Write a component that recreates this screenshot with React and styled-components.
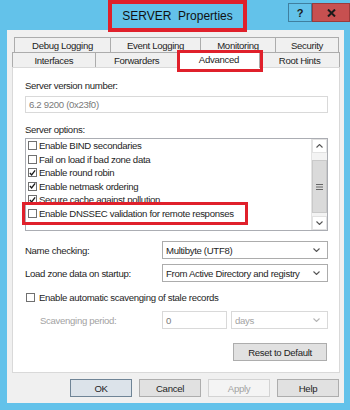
import React from 'react';
import styled, { createGlobalStyle } from 'styled-components';

const GlobalStyle = createGlobalStyle`
  * {
    margin: 0;
    padding: 0;
    box-sizing: border-box;
  }
  body {
    background: #63c2ea;
    font-family: "Liberation Sans", Arial, sans-serif;
    font-size: 9.6px;
    letter-spacing: -0.32px;
    color: #1e1e1e;
  }
`

const Frame = styled.div`
  width: 350px;
  height: 410px;
  background: #63c2ea;
  display: flex;
  flex-direction: column;
  padding: 0 6px 7px 7px;
`

const TitleBar = styled.div`
  height: 30px;
  position: relative;
  display: flex;
  justify-content: center;
`

const Title = styled.div`
  margin-left: 4px;
  width: 139px;
  height: 32px;
  border: 4px solid #e0202b;
  display: flex;
  align-items: center;
  justify-content: center;
  font-size: 12px;
  letter-spacing: 0;
  color: #111;
  white-space: pre;
  position: relative;
  z-index: 3;
`

const Caption = styled.div`
  position: absolute;
  top: 3px;
  right: -6px;
  display: flex;
`

const CaptionButton = styled.div`
  width: ${p => p.$w}px;
  height: 19px;
  display: flex;
  align-items: center;
  justify-content: center;
  background: ${p => (p.$close ? '#c75050' : '#63c2ea')};
  border: 1px solid ${p => (p.$close ? '#9b3b3b' : '#3f7f9f')};
  font-weight: bold;
  font-size: 11px;
  letter-spacing: 0;
  color: #1a1a1a;
`

const Client = styled.div`
  flex: 1;
  background: #f0f0f0;
  padding: 7px 4px 0 5px;
  display: flex;
  flex-direction: column;
`

const TabRow = styled.div`
  display: flex;
  height: 15px;
  margin-left: ${p => p.$indent || 0}px;
  position: relative;
  z-index: ${p => (p.$front ? 2 : 1)};
`

const Tab = styled.div`
  width: ${p => p.$w}px;
  display: flex;
  align-items: center;
  justify-content: center;
  border: 1px solid #acacac;
  border-bottom: none;
  margin-left: -1px;
  background: #f0f0f0;
  &:first-child {
    margin-left: 0;
  }
`

const ActiveTab = styled(Tab)`
  background: #fff;
  height: 18px;
  margin-top: -2px;
  position: relative;
  z-index: 2;
`

const Mark = styled.span`
  position: absolute;
  border: 3.5px solid #e0202b;
  top: ${p => p.$t}px;
  left: ${p => p.$l}px;
  right: ${p => p.$r}px;
  bottom: ${p => p.$b}px;
  pointer-events: none;
  z-index: 4;
`

const Panel = styled.div`
  height: 306px;
  background: #fff;
  border: 1px solid #d9d9d9;
  padding: 11px 11px 0 12px;
  display: flex;
  flex-direction: column;
`

const Label = styled.div`
  height: 13px;
  line-height: 13px;
  margin-top: ${p => p.$mt || 0}px;
  color: ${p => (p.$disabled ? '#a3a3a3' : '#1e1e1e')};
  padding-left: ${p => p.$indent || 0}px;
  width: ${p => (p.$w ? `${p.$w}px` : 'auto')};
  flex-shrink: 0;
`

const TextBox = styled.div`
  height: ${p => p.$h || 17}px;
  width: ${p => (p.$w ? `${p.$w}px` : 'auto')};
  margin-top: ${p => p.$mt || 0}px;
  border: 1px solid #d9d9d9;
  background: #fff;
  color: #7a7a7a;
  padding-left: 3px;
  display: flex;
  align-items: center;
`

const ListBox = styled.div`
  margin-top: 2px;
  height: 93px;
  border: 1px solid #abadb3;
  display: flex;
  position: relative;
`

const Items = styled.div`
  flex: 1;
  padding: 0 0 0 2px;
  overflow: hidden;
`

const Item = styled.div`
  height: 13.5px;
  display: flex;
  align-items: center;
  white-space: nowrap;
`

const Box = styled.span`
  width: 9px;
  height: 9px;
  border: 1px solid #707070;
  background: #fff;
  margin-right: ${p => p.$gap || 2}px;
  display: flex;
  align-items: center;
  justify-content: center;
  flex-shrink: 0;
`

const ScrollBar = styled.div`
  width: 16px;
  border-left: 1px solid #e3e3e3;
  background: #f3f3f3;
  display: flex;
  flex-direction: column;
`

const ScrollButton = styled.div`
  height: 14px;
  background: #fff;
  border: 1px solid #e2e2e2;
  display: flex;
  align-items: center;
  justify-content: center;
`

const Thumb = styled.div`
  height: 53px;
  margin: 7px 0 0 0;
  background: #dadada;
  border: 1px solid #c9c9c9;
  display: flex;
  align-items: center;
  justify-content: center;
`

const Spacer = styled.div`
  flex: 1;
`

const FieldRow = styled.div`
  display: flex;
  align-items: center;
  margin-top: ${p => p.$mt || 0}px;
`

const Select = styled.div`
  width: ${p => p.$w}px;
  height: ${p => p.$h || 18}px;
  margin-left: ${p => p.$ml || 0}px;
  border: 1px solid ${p => (p.$disabled ? '#d9d9d9' : '#acacac')};
  background: #fff;
  color: ${p => (p.$disabled ? '#a3a3a3' : '#1e1e1e')};
  display: flex;
  align-items: center;
  justify-content: space-between;
  padding: 0 7px 0 3px;
`

const CheckRow = styled.div`
  display: flex;
  align-items: center;
  height: 13px;
  margin-top: 9px;
  padding-left: 1px;
`

const Button = styled.div`
  width: ${p => p.$w}px;
  height: 18px;
  display: flex;
  align-items: center;
  justify-content: center;
  background: ${p => (p.$default ? '#dce3ea' : p.$disabled ? '#f4f4f4' : '#e1e1e1')};
  border: 1px solid ${p => (p.$default ? '#6f8496' : p.$disabled ? '#d3d3d3' : '#adadad')};
  color: ${p => (p.$disabled ? '#a3a3a3' : '#1e1e1e')};
`

const ResetRow = styled.div`
  display: flex;
  justify-content: flex-end;
  margin-top: 14px;
  padding-right: 1px;
`

const Footer = styled.div`
  display: flex;
  justify-content: flex-end;
  gap: 7px;
  padding: 6px 1px 0 0;
`

const Chevron = ({ up, color = '#555' }) => (
  <svg width="7" height="4" viewBox="0 0 7 4">
    <path d={up ? 'M0.5 3.5 L3.5 0.5 L6.5 3.5' : 'M0.5 0.5 L3.5 3.5 L6.5 0.5'} fill="none" stroke={color} strokeWidth="1.1" />
  </svg>
)

const Tick = () => (
  <svg width="8" height="8" viewBox="0 0 8 8">
    <path d="M1 4 L3 6.3 L7 1" fill="none" stroke="#1a1a1a" strokeWidth="1.5" />
  </svg>
)

const Grip = () => (
  <svg width="7" height="6" viewBox="0 0 7 6">
    <path d="M0 0.5 H7 M0 3 H7 M0 5.5 H7" stroke="#666" strokeWidth="1" />
  </svg>
)

const CloseGlyph = () => (
  <svg width="9" height="8" viewBox="0 0 9 8">
    <path d="M1 0.5 L8 7.5 M8 0.5 L1 7.5" stroke="#1a1a1a" strokeWidth="2" />
  </svg>
)

const options = [
  { text: 'Enable BIND secondaries', on: false },
  { text: 'Fail on load if bad zone data', on: false },
  { text: 'Enable round robin', on: true },
  { text: 'Enable netmask ordering', on: true },
  { text: 'Secure cache against pollution', on: true },
  { text: 'Enable DNSSEC validation for remote responses', on: false },
]

export default function App() {
  return (
    <Frame>
      <GlobalStyle />
      <TitleBar>
        <Title>{'SERVER  Properties'}</Title>
        <Caption>
          <CaptionButton $w={24}>?</CaptionButton>
          <CaptionButton $w={38} $close><CloseGlyph /></CaptionButton>
        </Caption>
      </TitleBar>
      <Client>
        <TabRow $indent={2}>
          <Tab $w={97}>Debug Logging</Tab>
          <Tab $w={91}>Event Logging</Tab>
          <Tab $w={76}>Monitoring</Tab>
          <Tab $w={64}>Security</Tab>
        </TabRow>
        <TabRow $front>
          <Tab $w={84}>Interfaces</Tab>
          <Tab $w={84}>Forwarders</Tab>
          <ActiveTab $w={83}>
            Advanced
            <Mark $t={-1} $l={-2} $r={-4} $b={-4} />
          </ActiveTab>
          <Tab $w={81}>Root Hints</Tab>
        </TabRow>
        <Panel>
          <Label>Server version number:</Label>
          <TextBox $mt={4}>6.2 9200 (0x23f0)</TextBox>
          <Label $mt={10}>Server options:</Label>
          <ListBox>
            <Items>
              {options.map(o => (
                <Item key={o.text}>
                  <Box>{o.on && <Tick />}</Box>
                  {o.text}
                </Item>
              ))}
            </Items>
            <ScrollBar>
              <ScrollButton><Chevron up /></ScrollButton>
              <Thumb><Grip /></Thumb>
              <Spacer />
              <ScrollButton><Chevron /></ScrollButton>
            </ScrollBar>
            <Mark $t={63} $l={-4} $r={79} $b={5} />
          </ListBox>
          <FieldRow $mt={10}>
            <Label $w={137}>Name checking:</Label>
            <Select $w={166}>Multibyte (UTF8)<Chevron /></Select>
          </FieldRow>
          <FieldRow $mt={5}>
            <Label $w={137}>Load zone data on startup:</Label>
            <Select $w={166}>From Active Directory and registry<Chevron /></Select>
          </FieldRow>
          <CheckRow>
            <Box $gap={4} />
            Enable automatic scavenging of stale records
          </CheckRow>
          <FieldRow $mt={7}>
            <Label $w={137} $indent={15} $disabled>Scavenging period:</Label>
            <TextBox $w={65} $h={18}>0</TextBox>
            <Select $w={97} $ml={4} $disabled>days<Chevron color="#b5b5b5" /></Select>
          </FieldRow>
          <ResetRow>
            <Button $w={94}>Reset to Default</Button>
          </ResetRow>
        </Panel>
        <Footer>
          <Button $w={62} $default>OK</Button>
          <Button $w={62}>Cancel</Button>
          <Button $w={62} $disabled>Apply</Button>
          <Button $w={62}>Help</Button>
        </Footer>
      </Client>
    </Frame>
  );
}
